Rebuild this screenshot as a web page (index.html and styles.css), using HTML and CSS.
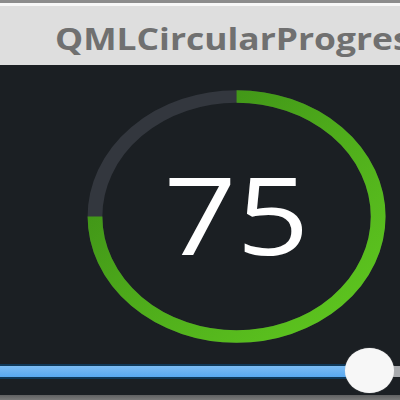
FILE: index.html
```html
<!DOCTYPE html>
<html lang="en">
<head>
  <meta charset="UTF-8">
  <title>QMLCircularProgressBar</title>
  <link rel="stylesheet" href="styles.css">
</head>
<body>
  <div class="window">
    <div class="titlebar">
      <span class="title">QMLCircularProgressBar</span>
    </div>

    <div class="stage">
      <!-- ring is drawn in a squashed box, then stretched to the window width -->
      <svg class="ring" viewBox="0 0 339 283" preserveAspectRatio="none">
        <defs>
          <linearGradient id="ringGreen" gradientUnits="userSpaceOnUse" x1="90" y1="250" x2="300" y2="40">
            <stop offset="0" stop-color="#5ec61f"/>
            <stop offset="0.5" stop-color="#4eab1b"/>
            <stop offset="1" stop-color="#3a8a16"/>
          </linearGradient>
        </defs>
        <circle class="ring-track" cx="200.5" cy="151.5" r="120"/>
        <circle class="ring-value" cx="200.5" cy="151.5" r="120" pathLength="100"
                stroke-dasharray="75 25" transform="rotate(-90 200.5 151.5)"/>
        <text class="ring-label" x="200.5" y="190">75</text>
      </svg>

      <div class="slider">
        <div class="slider-fill"></div>
        <div class="slider-rest"></div>
        <div class="slider-knob" style="left: 345px;"></div>
      </div>
    </div>

    <div class="statusbar"></div>
  </div>
</body>
</html>
```

FILE: styles.css
```css
html, body {
  margin: 0;
  padding: 0;
  width: 400px;
  height: 400px;
  overflow: hidden;
  background: #1b1f23;
}

.window {
  display: flex;
  flex-direction: column;
  height: 400px;
}

.titlebar {
  height: 62px;
  flex: none;
  border-top: 3px solid #8c8c8c;
  box-shadow: inset 0 3px 0 #f7f7f7;
  background: #dedede;
  padding: 0 0 0 55px;
  display: flex;
  align-items: center;
  overflow: hidden;
  white-space: nowrap;
}

.title {
  font-family: "Open Sans", "Noto Sans", sans-serif;
  font-weight: bold;
  font-size: 30px;
  color: #707070;
  padding-top: 8px;
  transform: scaleX(1.18);
  transform-origin: left center;
}

.stage {
  flex: 1;
  display: flex;
  flex-direction: column;
  background: #1b1f23;
}

.ring {
  display: block;
  width: 400px;
  height: 283px;
}

.ring-track {
  fill: none;
  stroke: #33373e;
  stroke-width: 12.5;
}

.ring-value {
  fill: none;
  stroke: url(#ringGreen);
  stroke-width: 12.5;
}

.ring-label {
  font-family: "Open Sans", "Noto Sans", sans-serif;
  font-size: 108px;
  font-weight: 500;
  fill: #ffffff;
  text-anchor: middle;
}

.slider {
  position: relative;
  height: 47px;
  display: flex;
  align-items: center;
}

.slider-fill {
  width: 370px;
  height: 11px;
  border-top: 2px solid #0f3858;
  border-bottom: 2px solid #0f3858;
  background: linear-gradient(#7cbcf4, #58a8ef);
}

.slider-rest {
  flex: 1;
  height: 11px;
  background: #a9abae;
}

.slider-knob {
  position: absolute;
  top: 0;
  width: 49px;
  height: 45px;
  border-radius: 50%;
  background: #f7f7f7;
  box-shadow: 0 0 1px #c8c8c8;
}

.statusbar {
  height: 5px;
  flex: none;
  background: linear-gradient(#5f6061, #7a7a7a);
}
```
